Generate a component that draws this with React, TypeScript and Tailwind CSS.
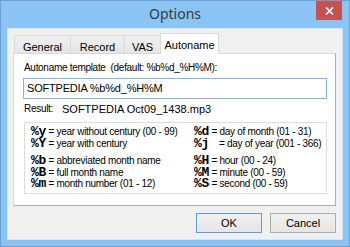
const sans = "font-['Liberation_Sans',Arial,sans-serif]";

const LEFT = [
  [{ k: '%y', d: 'year without century (00 - 99)' }, { k: '%Y', d: 'year with century' }],
  [{ k: '%b', d: 'abbreviated month name' }, { k: '%B', d: 'full month name' }, { k: '%m', d: 'month number (01 - 12)' }],
];

const RIGHT = [
  [{ k: '%d', d: 'day of month (01 - 31)' }, { k: '%j ', d: 'day of year (001 - 366)' }],
  [{ k: '%H', d: 'hour (00 - 24)' }, { k: '%M', d: 'minute (00 - 59)' }, { k: '%S', d: 'second (00 - 59)' }],
];

function Legend({ groups }: { groups: { k: string; d: string }[][] }) {
  return (
    <div className="flex flex-col gap-[6px]">
      {groups.map((g, i) => (
        <div key={i} className="flex flex-col">
          {g.map((row) => (
            <div key={row.k} className="flex items-baseline h-[11.5px] leading-[11.5px] whitespace-pre">
              <span className="font-['Liberation_Mono',monospace] font-bold text-[13px] leading-[11.5px]">{row.k}</span>
              <span> = {row.d}</span>
            </div>
          ))}
        </div>
      ))}
    </div>
  );
}

function Tab({ label, w, active }: { label: string; w: string; active?: boolean }) {
  if (active) {
    return (
      <div className={`${w} -ml-px h-[21px] -mb-px relative z-10 bg-white border border-b-0 border-[#d9d9d9] flex justify-center pt-[3px] text-[11px]`}>
        {label}
      </div>
    );
  }
  return (
    <div className={`${w} -ml-px first:ml-0 h-[18px] bg-gradient-to-b from-[#f0f0f0] to-[#e5e5e5] border border-b-0 border-[#d9d9d9] flex justify-center pt-[3px] text-[11px]`}>
      {label}
    </div>
  );
}

export default function App() {
  return (
    <div className={`w-[350px] h-[247px] border border-[#6d9fd1] bg-[#8ac4f5] flex flex-col text-black ${sans}`}>
      {/* title bar */}
      <div className="h-[27px] relative flex items-center justify-center">
        <span className="font-['Noto_Sans',sans-serif] text-[14px] text-[#383838] -mt-[2px]">Options</span>
        <div className="absolute top-0 right-[7px] w-[26px] h-[19px] bg-[#c75050] flex items-center justify-center">
          <svg width="9" height="8" viewBox="0 0 9 8">
            <path d="M1 0.5 L8 7.5 M8 0.5 L1 7.5" stroke="white" strokeWidth="1.7" />
          </svg>
        </div>
      </div>

      {/* client */}
      <div className="mx-[6px] mb-[6px] flex-1 border border-[#cfe4f8] bg-[#f0f0f0] pl-[5px] pr-[6px] pt-[4px] flex flex-col">
        <div className="h-[20px] flex items-end pl-[1px]">
          <Tab label="General" w="w-[57px]" />
          <Tab label="Record" w="w-[55px]" />
          <Tab label="VAS" w="w-[37px]" />
          <Tab label="Autoname" w="w-[59px]" active />
        </div>

        <div className="h-[153px] bg-white border border-[#d9d9d9] border-r-[#adadad] border-b-[#adadad] px-[9px] pt-[8px] text-[10px] tracking-[-0.3px] flex flex-col">
          <div className="pl-[1px] leading-[12px] whitespace-pre">Autoname template  (default: %b%d_%H%M):</div>
          <div className="mt-[4px] w-[304px] h-[21px] border border-[#7eb4ea] flex items-center px-[3px] text-[11px] tracking-[-0.2px]">
            SOFTPEDIA %b%d_%H%M
          </div>
          <div className="mt-[4px] pl-[1px] flex leading-[12px] text-[11px] tracking-normal">
            <span className="w-[38px] text-[10px] tracking-[-0.3px]">Result:</span>
            <span>SOFTPEDIA Oct09_1438.mp3</span>
          </div>
          <div className="mt-[7px] ml-[1px] w-[303px] h-[72px] border border-[#dcdcdc] pl-[6px] pt-[3px] flex">
            <div className="w-[163px]">
              <Legend groups={LEFT} />
            </div>
            <Legend groups={RIGHT} />
          </div>
        </div>

        <div className="mt-[7px] flex justify-end gap-[8px] text-[11px]">
          <button className="w-[66px] h-[20px] border border-[#5a9ee0] bg-gradient-to-b from-[#f0f0f0] to-[#e5e5e5]">OK</button>
          <button className="w-[66px] h-[20px] border border-[#acacac] bg-gradient-to-b from-[#f0f0f0] to-[#e5e5e5]">Cancel</button>
        </div>
      </div>
    </div>
  );
}
